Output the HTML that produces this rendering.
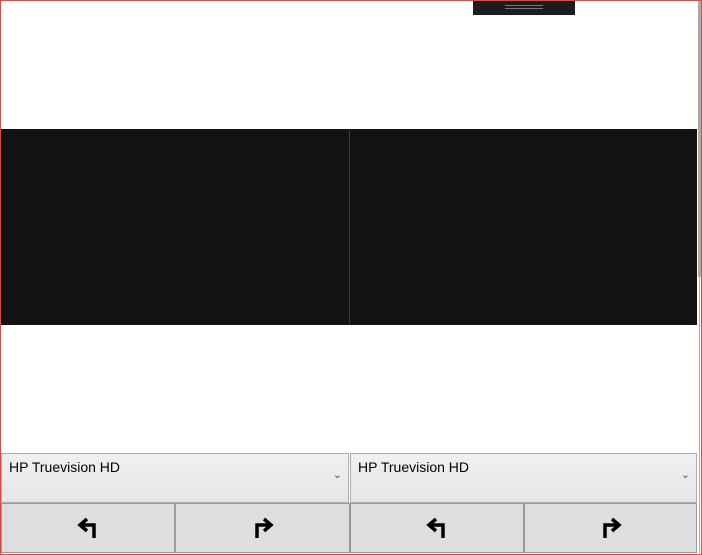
<!DOCTYPE html><html><head><style>
body{margin:0;width:702px;height:555px;position:relative;background:#fff;overflow:hidden;font-family:"Segoe UI","Liberation Sans",sans-serif}
.b{position:absolute;left:0;top:0;width:700px;height:553px;border:1px solid #e04848}
.d{position:absolute;background:#141210}
.sel{position:absolute;top:453px;height:48px;background:linear-gradient(#f0f0f0,#e6e6e6);border:1px solid #acacac;font-size:14px;color:#000}
.sel span{position:absolute;left:7px;top:5px}
.sel i{position:absolute;right:6px;top:14px;font-style:normal;font-size:11px;color:#555}
.bt{position:absolute;top:503px;height:48px;background:#dedede;border:1px solid #9a9a9a;display:flex;align-items:center;justify-content:center}
</style></head><body>
<div class="b"></div>
<div style="position:absolute;left:473px;top:1px;width:102px;height:14px;background:#1c1c1c"></div>
<div style="position:absolute;left:505px;top:5px;width:38px;height:1px;background:#777"></div>
<div style="position:absolute;left:505px;top:8px;width:38px;height:1px;background:#777"></div>
<div style="position:absolute;left:698px;top:1px;width:3px;height:276px;background:#aaa"></div>
<div style="position:absolute;left:699px;top:277px;width:1px;height:276px;background:#aaa"></div>
<div class="d" style="left:1px;top:129px;width:348px;height:196px"></div>
<div style="position:absolute;left:349px;top:129px;width:1px;height:196px;background:#3a3836"></div>
<div class="d" style="left:350px;top:129px;width:347px;height:196px"></div>
<div class="sel" style="left:1px;width:346px"><span>HP Truevision HD</span><i>⌄</i></div>
<div class="sel" style="left:350px;width:345px"><span>HP Truevision HD</span><i>⌄</i></div>
<div class="bt" style="left:1px;width:172px"><svg width="26" height="24"><path d="M19 22V9H6M12 3L5 9l7 6" fill="none" stroke="#000" stroke-width="3.5"/></svg></div>
<div class="bt" style="left:175px;width:173px"><svg width="26" height="24"><path d="M7 22V9h13M14 3l7 6-7 6" fill="none" stroke="#000" stroke-width="3.5"/></svg></div>
<div class="bt" style="left:350px;width:172px"><svg width="26" height="24"><path d="M19 22V9H6M12 3L5 9l7 6" fill="none" stroke="#000" stroke-width="3.5"/></svg></div>
<div class="bt" style="left:524px;width:171px"><svg width="26" height="24"><path d="M7 22V9h13M14 3l7 6-7 6" fill="none" stroke="#000" stroke-width="3.5"/></svg></div>
</body></html>
